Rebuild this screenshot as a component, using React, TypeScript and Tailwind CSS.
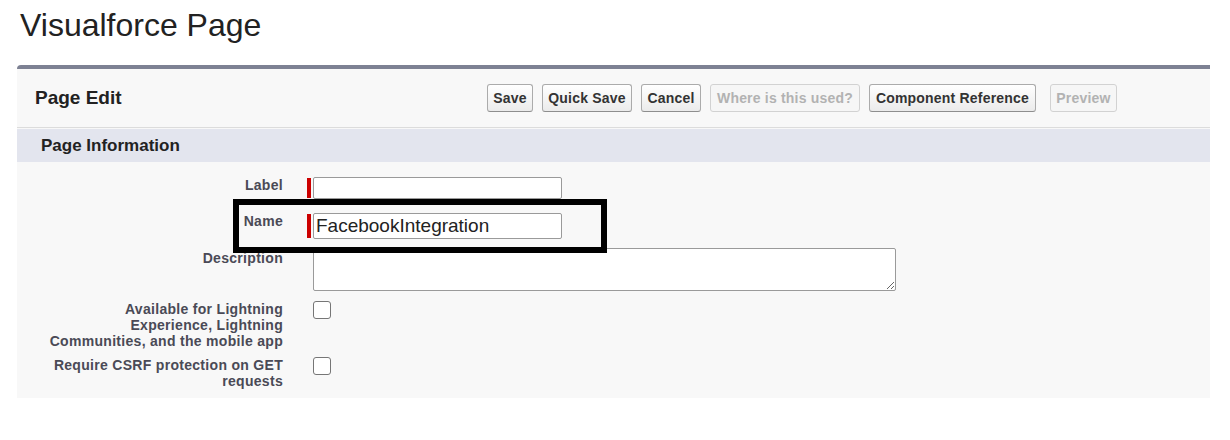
import React from 'react';

interface ButtonData {
  label: string;
  width: string;
  disabled?: boolean;
}

const buttons: ButtonData[] = [
  { label: 'Save', width: 'w-[46px]' },
  { label: 'Quick Save', width: 'w-[90px]' },
  { label: 'Cancel', width: 'w-[60px]' },
  { label: 'Where is this used?', width: 'w-[150px]', disabled: true },
  { label: 'Component Reference', width: 'w-[167px]' },
  { label: 'Preview', width: 'w-[67px] ml-[5px]', disabled: true },
];

const Btn: React.FC<{ btn: ButtonData }> = ({ btn }) => (
  <button
    type="button"
    className={
      btn.disabled
        ? `${btn.width} h-[28px] rounded-[3px] border border-[#d2d2d2] bg-[#f6f6f6] text-[14px] font-bold text-[#b2b2b2] tracking-[0.2px]`
        : `${btn.width} h-[28px] rounded-[3px] border border-[#ababab] border-b-[#8e8e8e] bg-gradient-to-b from-white to-[#ebebeb] text-[14px] font-bold text-[#333] tracking-[0.2px]`
    }
  >
    {btn.label}
  </button>
);

const RedBar: React.FC<{ h: string }> = ({ h }) => <div className={`w-[4px] ${h} bg-[#c00] mt-[1px]`} />;

const Checkbox: React.FC = () => (
  <input
    type="checkbox"
    className="appearance-none w-[18px] h-[18px] rounded-[3px] border border-[#767676] bg-white"
  />
);

const Row: React.FC<{ label: React.ReactNode; className?: string; labelClass?: string; children: React.ReactNode }> = ({
  label,
  className = '',
  labelClass = '',
  children,
}) => (
  <div className={`flex items-start ${className}`}>
    <div className={`w-[266px] pl-[20px] text-right text-[14px] leading-[16px] font-bold text-[#4a4a56] tracking-[0.3px] ${labelClass}`}>
      {label}
    </div>
    <div className="ml-[24px] flex items-start gap-[2px]">{children}</div>
  </div>
);

export default function App() {
  return (
    <div className="relative w-[1230px] h-[440px] bg-white overflow-hidden" style={{ fontFamily: '"Liberation Sans", Arial, sans-serif' }}>
      <h1 className="ml-[20px] mt-[7px] text-[32px] leading-[37px] text-[#222]">Visualforce Page</h1>

      <div className="ml-[17px] mt-[21px] w-[1193px] bg-[#f8f8f8] border-t-[4px] border-[#7d8193] rounded-tl-[4px] pb-[9px]">
        <div className="flex items-center h-[59px] border-b border-[#dcdcdc]">
          <div className="w-[470px] pl-[18px] text-[19px] font-bold text-[#222]">Page Edit</div>
          <div className="flex items-center gap-[9px]">
            {buttons.map((b) => (
              <Btn key={b.label} btn={b} />
            ))}
          </div>
        </div>

        <div className="mt-[1px] h-[33px] bg-[#e3e5ee] flex items-center pl-[24px] text-[17px] font-bold text-[#222]">
          Page Information
        </div>

        <Row label="Label" className="mt-[15px]">
          <RedBar h="h-[20px]" />
          <input type="text" className="w-[249px] h-[22px] border border-[#9a9a9a] rounded-[2px] bg-white" />
        </Row>

        <Row label="Name" className="mt-[14px]">
          <RedBar h="h-[24px]" />
          <input
            type="text"
            defaultValue="FacebookIntegration"
            className="w-[249px] h-[26px] border border-[#9a9a9a] rounded-[2px] bg-white pl-[2px] text-[19px] text-[#222] outline-none"
          />
        </Row>

        <Row label="Description" className="mt-[9px]" labelClass="pt-[2px]">
          <div className="w-[4px]" />
          <textarea className="w-[583px] h-[43px] border border-[#9a9a9a] rounded-[2px] bg-white block" />
        </Row>

        <Row
          label={
            <>
              Available for Lightning
              <br />
              Experience, Lightning
              <br />
              Communities, and the mobile app
            </>
          }
          className="mt-[10px]"
        >
          <div className="w-[4px]" />
          <Checkbox />
        </Row>

        <Row
          label={
            <>
              Require CSRF protection on GET
              <br />
              requests
            </>
          }
          className="mt-[8px]"
        >
          <div className="w-[4px]" />
          <Checkbox />
        </Row>
      </div>

      <div className="absolute left-[233px] top-[199px] w-[374px] h-[54px] border-[6px] border-black pointer-events-none" />
    </div>
  );
}
